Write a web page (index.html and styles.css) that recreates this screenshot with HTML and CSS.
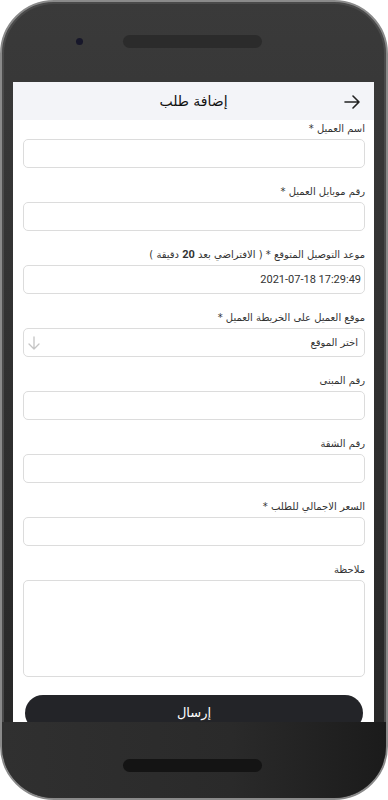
FILE: index.html
```html
<!DOCTYPE html>
<html lang="ar" dir="rtl">
<head>
    <meta charset="UTF-8">
    <meta name="viewport" content="width=device-width, initial-scale=1.0">
    <title>إضافة طلب</title>
    <link rel="stylesheet" href="styles.css">
</head>
<body>
    <div class="phone">
        <div class="bezel-top">
            <span class="camera"></span>
            <span class="speaker"></span>
        </div>

        <div class="screen">
            <!-- Header -->
            <div class="header">
                <button class="back-btn" aria-label="رجوع">
                    <svg width="16" height="14" viewBox="0 0 16 14">
                        <path d="M1 7H15M9 1L15 7L9 13" fill="none" stroke="#222" stroke-width="1.6" stroke-linecap="round" stroke-linejoin="round"/>
                    </svg>
                </button>
                <h1>إضافة طلب</h1>
            </div>

            <!-- Form -->
            <form class="order-form">
                <div class="field">
                    <label>اسم العميل *</label>
                    <input type="text">
                </div>
                <div class="field">
                    <label>رقم موبايل العميل *</label>
                    <input type="text">
                </div>
                <div class="field">
                    <label>موعد التوصيل المتوقع * ( الافتراضي بعد <b>20</b> دقيقة )</label>
                    <input type="text" class="ltr" value="2021-07-18 17:29:49">
                </div>
                <div class="field">
                    <label>موقع العميل على الخريطة العميل *</label>
                    <div class="select">
                        <span>اختر الموقع</span>
                        <svg width="12" height="14" viewBox="0 0 12 14">
                            <path d="M6 1V13M1 8L6 13L11 8" fill="none" stroke="#c4c4c4" stroke-width="1.3" stroke-linecap="round" stroke-linejoin="round"/>
                        </svg>
                    </div>
                </div>
                <div class="field">
                    <label>رقم المبنى</label>
                    <input type="text">
                </div>
                <div class="field">
                    <label>رقم الشقة</label>
                    <input type="text">
                </div>
                <div class="field">
                    <label>السعر الاجمالي للطلب *</label>
                    <input type="text">
                </div>
                <div class="field">
                    <label>ملاحظة</label>
                    <textarea></textarea>
                </div>
                <button type="button" class="submit-btn">إرسال</button>
            </form>
        </div>

        <div class="bezel-bottom">
            <span class="speaker bottom"></span>
        </div>
    </div>
</body>
</html>
```

FILE: styles.css
```css
body {
    margin: 0;
    background: #fff;
    font-family: "DejaVu Sans", "Noto Sans", sans-serif;
}
.phone {
    width: 388px;
    height: 800px;
    box-sizing: border-box;
    border: 2px solid #8a8a8a;
    border-radius: 54px;
    box-shadow: inset 0 0 0 2px #4a4a4a;
    background: linear-gradient(#3a3a3a, #262626);
    display: flex;
    flex-direction: column;
    overflow: hidden;
}
.bezel-top {
    height: 80px;
    flex: none;
    display: flex;
    align-items: center;
    direction: ltr;
    padding-bottom: 2px;
    box-sizing: border-box;
}
.camera {
    width: 7px;
    height: 7px;
    border-radius: 50%;
    background: #17172a;
    margin-left: 74px;
}
.speaker {
    width: 139px;
    height: 13px;
    border-radius: 7px;
    background: #2b2b2b;
    margin-left: 40px;
}
.screen {
    flex: 1;
    margin: 0 12px 0 11px;
    background: #fff;
    overflow: hidden;
}
.bezel-bottom {
    height: 76px;
    flex: none;
    display: flex;
    align-items: center;
    justify-content: center;
    direction: ltr;
    background: linear-gradient(90deg, #303030, #2a2a2a 60%, #1b1b1b);
}
.speaker.bottom {
    background: #141414;
    margin: 10px 0 0 -3px;
}

.header {
    height: 38px;
    background: #f3f4f8;
    display: flex;
    align-items: center;
    justify-content: center;
    position: relative;
}
.header h1 {
    margin: 0;
    font-size: 14px;
    font-weight: normal;
    color: #111;
}
.back-btn {
    position: absolute;
    right: 14px;
    top: 13px;
    padding: 0;
    border: none;
    background: none;
    line-height: 0;
}

.order-form {
    padding: 2px 9px 0 10px;
}
.field {
    margin-bottom: 17px;
}
.field label {
    display: block;
    height: 14px;
    font-size: 10px;
    line-height: 14px;
    color: #333;
    margin-bottom: 3px;
    white-space: nowrap;
}
.field label b {
    font-family: Roboto, sans-serif;
    font-weight: bold;
    font-size: 11px;
}
.field input,
.select,
.field textarea {
    display: block;
    width: 100%;
    box-sizing: border-box;
    height: 29px;
    border: 1px solid #dcdcdc;
    border-radius: 5px;
    background: #fff;
    font-family: "DejaVu Sans", sans-serif;
    font-size: 11.5px;
    color: #333;
    padding: 0 4px;
    margin: 0;
}
.field input.ltr {
    direction: ltr;
    text-align: right;
    font-family: Roboto, sans-serif;
    font-size: 11px;
    padding-right: 3px;
}
.select {
    display: flex;
    align-items: center;
    justify-content: space-between;
    padding: 0 6px 0 4px;
    font-size: 10px;
}
.field textarea {
    height: 97px;
    resize: none;
}
.field:last-of-type {
    margin-bottom: 18px;
}
.submit-btn {
    display: block;
    width: calc(100% - 4px);
    margin: 0 auto;
    height: 36px;
    border: none;
    border-radius: 18px;
    background: #232428;
    color: #fff;
    font-family: "DejaVu Sans", sans-serif;
    font-size: 13px;
    padding-bottom: 2px;
}
```
